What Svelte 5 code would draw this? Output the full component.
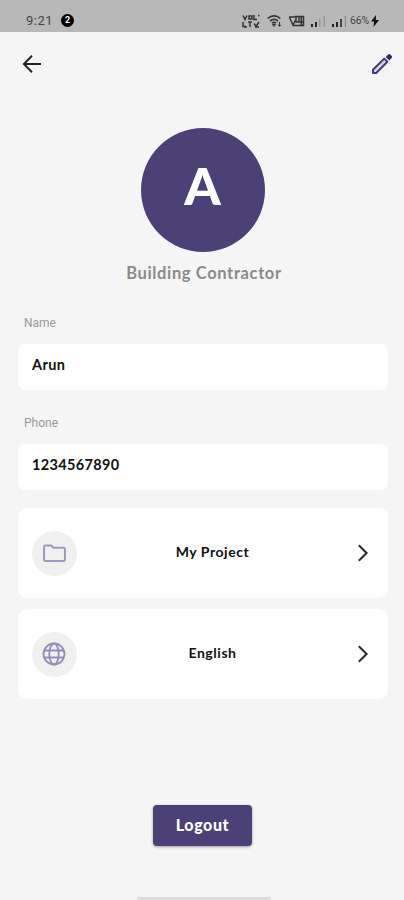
<script>
  const fields = [
    { label: 'Name', value: 'Arun' },
    { label: 'Phone', value: '1234567890' },
  ];

  const links = [
    { icon: 'folder', label: 'My Project' },
    { icon: 'globe', label: 'English' },
  ];
</script>

<div class="screen">
  <div class="status">
    <span class="time">9:21</span>
    <span class="badge">2</span>
    <div class="tray">
      <svg class="volte" width="18" height="14" viewBox="0 0 18 14" fill="none" stroke="#333" stroke-width="1.5">
        <path d="M1 1.500l2 4 2-4M7 2h3v3H7zM12 1v4.500h3M16 1.500h1.500M1 8v4.500h3M6 8h4M8 8v5M12 9.500l2 3 3-4.500M2 13h3M13 13h4" />
      </svg>
      <svg class="wifi" width="15" height="14" viewBox="0 0 15 14" fill="none" stroke="#333" stroke-width="1.7">
        <path d="M.7 4.500c3.600-3.400 9-3.400 12.600 0M3 7c2.400-2 5.600-2 8 0M5 9.200c1.300-1 2.700-1 4 0" />
        <path d="M7 12.500l-1.600-2h3.200zM12.500 8v4M11 10.700l1.500 1.700L14 10.700" stroke-width="1" />
      </svg>
      <svg class="vowifi" width="17" height="14" viewBox="0 0 17 14" fill="none" stroke="#333" stroke-width="1.5">
        <path d="M1 3h6M1.500 3.500l3.500 7.500 2.500-5M8 2.500v6M11 2.500v6M5 11.500h10.500V2.500H7M13.300 3v8M8 8h7" />
      </svg>
      <svg class="signal" width="16" height="12" viewBox="0 0 16 12">
        <path d="M1 9h2v3H1zM5 7h2v5H5z" fill="#222" />
        <path d="M9 4h1.500v8H9zM13.500 1H15v11h-1.500z" fill="#969696" />
      </svg>
      <svg class="signal" width="16" height="12" viewBox="0 0 16 12">
        <path d="M1 9h2v3H1zM5 7h2v5H5z" fill="#222" />
        <path d="M9 4h2v8H9z" fill="#444" />
        <path d="M13.800 1H15v11h-1.200z" fill="#8c8c8c" />
      </svg>
      <span class="battery">66%</span>
      <svg class="bolt" width="8" height="12" viewBox="0 0 8 12" fill="#111">
        <path d="M5 0L0 6.500h3L2.500 12 8 5H4.800z" />
      </svg>
    </div>
  </div>

  <header>
    <svg class="back" width="20" height="20" viewBox="0 0 20 20" fill="none" stroke="#222" stroke-width="2">
      <path d="M19 10H2.400M10 1.800L1.900 10l8.100 8.200" />
    </svg>
    <svg class="edit" width="22" height="22" viewBox="0 0 22 22">
      <path d="M2 20v-3.200L13.200 5.600l3.200 3.200L5.200 20z" fill="#d9d5e6" stroke="#443a78" stroke-width="2" stroke-linejoin="round" />
      <path d="M14.800 3.900l2.400-2.400q1-1 2 0l1.500 1.500q1 1 0 2l-2.400 2.400z" fill="#32266e" />
    </svg>
  </header>

  <main>
    <div class="avatar">A</div>
    <div class="role">Building Contractor</div>

    {#each fields as field}
      <div class="field">
        <div class="label">{field.label}</div>
        <div class="value">{field.value}</div>
      </div>
    {/each}

    <div class="links">
      {#each links as link}
        <div class="link">
          <div class="icon">
            {#if link.icon === 'folder'}
              <svg width="23" height="19" viewBox="0 0 24 20" fill="none" stroke="#9d98c0" stroke-width="2.1" stroke-linejoin="round">
                <path d="M2.500 1.500h6l2.500 2.500h10.500q1.500 0 1.500 1.500v11q0 1.500-1.500 1.500h-19q-1.500 0-1.500-1.500V3q0-1.500 1.500-1.500z" />
              </svg>
            {:else}
              <svg width="24" height="24" viewBox="0 0 24 24" fill="none" stroke="#918dbb" stroke-width="1.8">
                <circle cx="12" cy="12" r="10.500" />
                <ellipse cx="12" cy="12" rx="4.700" ry="10.500" />
                <path d="M2.500 8.500h19M2.500 15.500h19" />
              </svg>
            {/if}
          </div>
          <span class="link-label">{link.label}</span>
          <svg class="chevron" width="12" height="18" viewBox="0 0 12 18" fill="none" stroke="#2b2b2b" stroke-width="2">
            <path d="M1.800 1.200L9.600 9l-7.800 7.800" />
          </svg>
        </div>
      {/each}
    </div>

    <button>Logout</button>
  </main>

  <div class="home-bar"></div>
</div>

<style>
  :global(body) {
    background: #f5f5f5;
  }

  .screen {
    display: flex;
    flex-direction: column;
    height: 900px;
    overflow: hidden;
    background: #f5f5f5;
    font-family: Lato, sans-serif;
    color: #111;
  }

  .status {
    display: flex;
    align-items: center;
    box-sizing: border-box;
    height: 32px;
    padding: 9px 25px 0 26px;
    background: #b8b8b8;
    font-family: Roboto, sans-serif;
    color: #444;
  }

  .time {
    width: 28px;
    font-size: 13px;
    letter-spacing: 0.5px;
  }

  .badge {
    width: 13px;
    height: 13px;
    margin-left: 7px;
    border-radius: 50%;
    background: #000;
    color: #fff;
    font-size: 9px;
    font-weight: 700;
    line-height: 13px;
    text-align: center;
  }

  .tray {
    display: flex;
    align-items: center;
    margin-left: auto;
  }

  .volte {
    margin-right: 1px;
  }

  .wifi {
    margin-left: 6px;
  }

  .vowifi {
    margin-left: 6px;
  }

  .signal {
    margin: 1px 0 0 5px;
  }

  .battery {
    width: 20px;
    margin-left: 3px;
    font-size: 10.5px;
    letter-spacing: -0.2px;
  }

  .bolt {
    margin-left: 1px;
  }

  header {
    display: flex;
    justify-content: space-between;
    align-items: center;
    height: 63px;
    padding: 0 11px 0 22px;
  }

  main {
    display: flex;
    flex-direction: column;
    flex: 1;
    padding: 33px 16px 0 18px;
  }

  .avatar {
    align-self: center;
    width: 124px;
    height: 124px;
    margin-right: 1px;
    border-radius: 50%;
    background: #4c4177;
    color: #fff;
    font-size: 52px;
    font-weight: 900;
    line-height: 115px;
    text-align: center;
  }

  .role {
    height: 20px;
    margin: 11px 0 26px 2px;
    color: #8a8a8a;
    font-size: 16.5px;
    font-weight: 700;
    line-height: 20px;
    letter-spacing: 0.63px;
    text-align: center;
  }

  .field {
    margin-bottom: 18px;
  }

  .label {
    height: 35px;
    padding-left: 6px;
    color: #999;
    font-family: Roboto, sans-serif;
    font-size: 12px;
    line-height: 28px;
  }

  .field + .field .label {
    height: 36px;
    line-height: 30px;
  }

  .value {
    box-sizing: border-box;
    height: 46px;
    padding: 11px 14px;
    border-radius: 8px;
    background: #fff;
    font-size: 14.5px;
    font-weight: 700;
    line-height: 20px;
    letter-spacing: 0.35px;
  }

  .links {
    display: grid;
    gap: 11px;
  }

  .link {
    display: flex;
    align-items: center;
    justify-content: space-between;
    box-sizing: border-box;
    height: 90px;
    padding: 0 19px 0 14px;
    border-radius: 9px;
    background: #fff;
  }

  .icon {
    display: flex;
    align-items: center;
    justify-content: center;
    box-sizing: border-box;
    width: 45px;
    height: 45px;
    padding-right: 1px;
    border-radius: 50%;
    background: #f2f0ef;
  }

  .link-label {
    flex: 1;
    padding: 0 9px 3px 0;
    font-size: 14px;
    font-weight: 700;
    letter-spacing: 0.55px;
    text-align: center;
  }

  button {
    align-self: center;
    width: 99px;
    height: 41px;
    margin: 106px 1px 0 0;
    padding: 0 0 2px;
    border: 0;
    border-radius: 4px;
    background: #4c4177;
    box-shadow: 0 1px 3px rgba(0, 0, 0, 0.35);
    color: #fff;
    font-family: Lato, sans-serif;
    font-size: 16px;
    font-weight: 900;
    letter-spacing: 0.6px;
  }

  .home-bar {
    align-self: center;
    width: 134px;
    height: 3px;
    margin-left: 3px;
    border-radius: 2px 2px 0 0;
    background: #dcdcdc;
  }
</style>
